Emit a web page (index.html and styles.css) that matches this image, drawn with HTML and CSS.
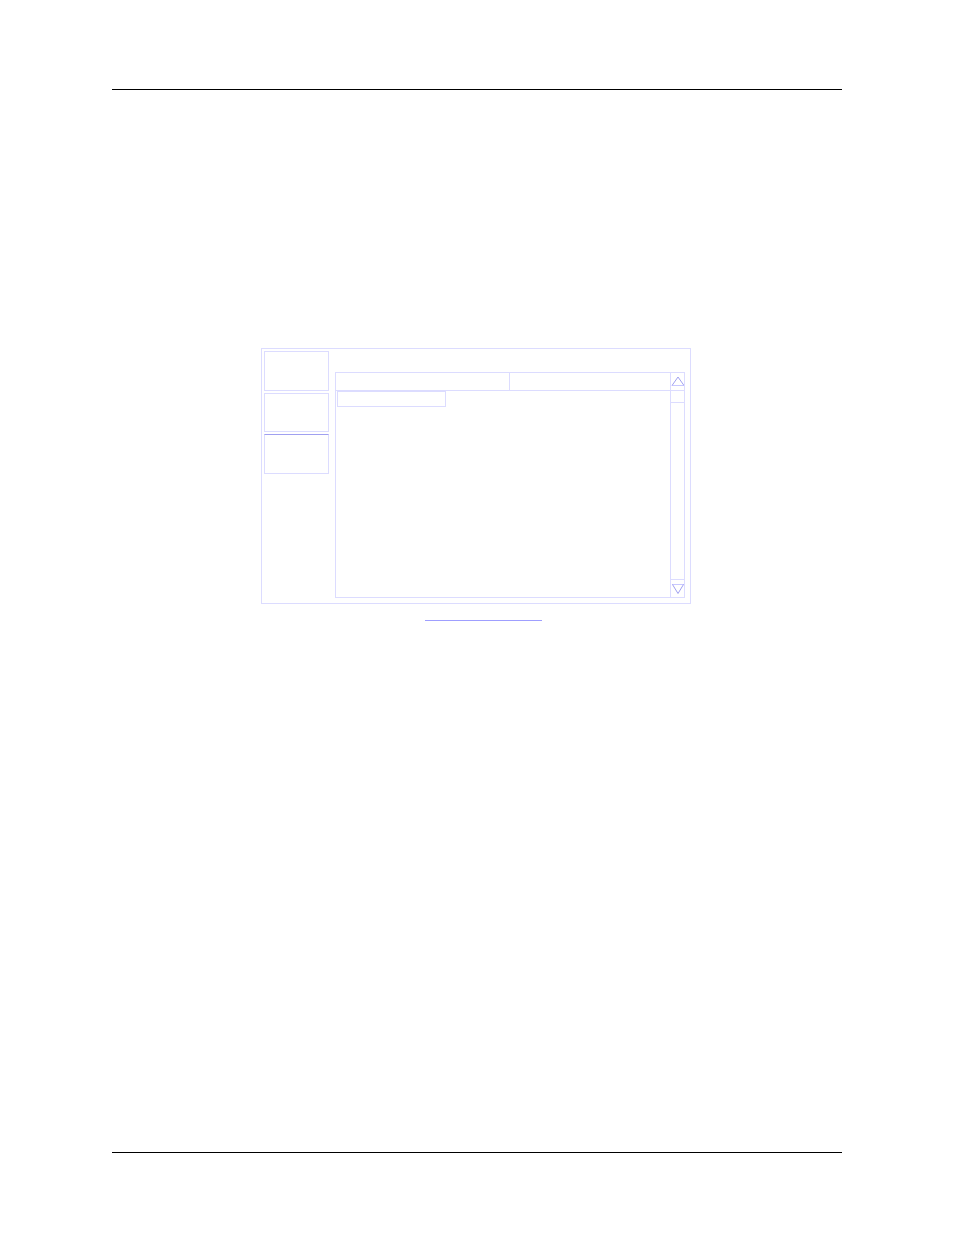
FILE: index.html
```html
<!DOCTYPE html>
<html lang="en">
<head>
<meta charset="utf-8">
<meta name="viewport" content="width=device-width, initial-scale=1">
<link rel="stylesheet" href="styles.css">
</head>
<body>
<div class="page">
  <header class="page-header"></header>
  <main class="content">
    <figure class="figure">
      <div class="window">
        <nav class="sidebar">
          <button class="side-button" type="button" aria-label="First"></button>
          <button class="side-button" type="button" aria-label="Second"></button>
          <button class="side-button side-button-active" type="button" aria-label="Third"></button>
        </nav>
        <section class="panel">
          <table class="list">
            <thead>
              <tr><th class="list-head list-head-first"></th><th class="list-head"></th></tr>
            </thead>
            <tbody>
              <tr><td class="list-cell"><div class="selection"></div></td><td class="list-cell"></td></tr>
            </tbody>
          </table>
          <div class="scrollbar">
            <button class="scroll-button scroll-up" type="button" aria-label="Scroll up">
              <svg class="arrow" width="13" height="17" viewBox="0 0 13 17">
                <path class="arrow-base" d="M1 12.5H13"/>
                <path class="arrow-side" d="M1 12.5L7 4L13 12.5"/>
              </svg>
            </button>
            <div class="scroll-thumb"></div>
            <button class="scroll-button scroll-down" type="button" aria-label="Scroll down">
              <svg class="arrow" width="13" height="17" viewBox="0 0 13 17">
                <path class="arrow-base" d="M1 4.5H13"/>
                <path class="arrow-side" d="M1.5 4.5L7 13.5L12.5 4.5"/>
              </svg>
            </button>
          </div>
        </section>
      </div>
      <figcaption class="caption"><a class="caption-link" href="#" aria-label="Figure"></a></figcaption>
    </figure>
  </main>
  <footer class="page-footer"></footer>
</div>
</body>
</html>
```
FILE: styles.css
```css
* {
  box-sizing: border-box;
}

body {
  margin: 0;
  background: #fff;
  font-family: "Liberation Sans", Arial, sans-serif;
}

.page {
  display: flex;
  flex-direction: column;
  min-height: 100vh;
  padding: 0 112px;
}

.page-header {
  height: 90px;
  border-bottom: 1px solid #000;
}

.page-footer {
  height: 83px;
  border-top: 1px solid #000;
}

.content {
  flex: 1;
  padding: 258px 2px 0 0;
}

.figure {
  max-width: 430px;
  margin: 0 auto;
}

.window {
  display: grid;
  grid-template-columns: 65px minmax(0, 1fr);
  gap: 6px;
  padding: 2px 5px 5px 2px;
  border: 1px solid #dcdcff;
}

.sidebar {
  display: flex;
  flex-direction: column;
  gap: 2px;
}

.side-button {
  height: 40px;
  padding: 0;
  border: 1px solid #dcdcff;
  background: #fff;
}

.side-button:nth-child(2) {
  height: 39px;
}

.side-button-active {
  border-top-color: #a0a0f0;
}

.panel {
  display: grid;
  grid-template-columns: minmax(0, 1fr) 14px;
  min-height: 226px;
  margin-top: 21px;
  border: 1px solid #dcdcff;
}

.list {
  width: 100%;
  height: 100%;
  border-collapse: separate;
  border-spacing: 0;
  table-layout: fixed;
}

.list-head {
  height: 18px;
  padding: 0;
  border-bottom: 1px solid #dcdcff;
}

.list-head-first {
  width: 52%;
  border-right: 1px solid #dcdcff;
}

.list-cell {
  padding: 0 0 0 1px;
  vertical-align: top;
}

.selection {
  width: 109px;
  height: 16px;
  border: 1px solid #dcdcff;
}

.scrollbar {
  display: flex;
  flex-direction: column;
  border-left: 1px solid #dcdcff;
}

.scroll-button {
  height: 18px;
  padding: 0;
  border: 0 solid #dcdcff;
  background: #fff;
}

.scroll-up {
  border-bottom-width: 1px;
}

.scroll-down {
  margin-top: auto;
  border-top-width: 1px;
}

.scroll-thumb {
  height: 12px;
  border-bottom: 1px solid #dcdcff;
}

.arrow {
  display: block;
  fill: none;
}

.arrow-base {
  stroke: #c8c8ff;
}

.arrow-side {
  stroke: #a0a0f0;
}

.caption {
  display: flex;
  justify-content: center;
  padding: 16px 0 0 15px;
}

.caption-link {
  width: 117px;
  height: 1px;
  background: #9f9fff;
}
```
